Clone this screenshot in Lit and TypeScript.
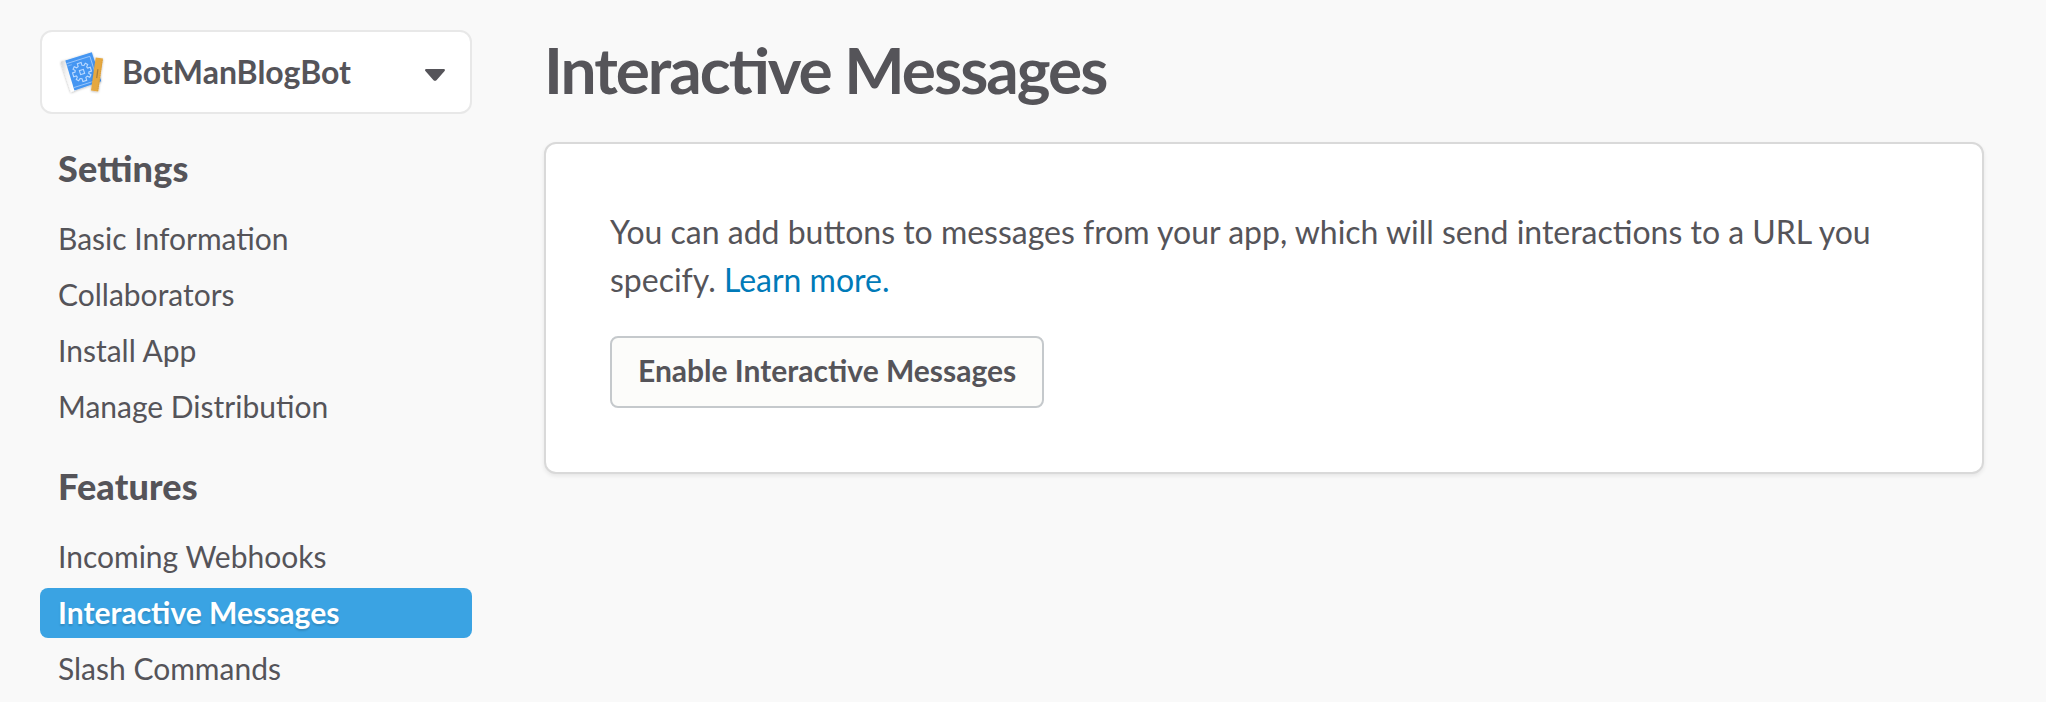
import { LitElement, html, css } from "lit";
import { customElement, state } from "lit/decorators.js";
import { classMap } from "lit/directives/class-map.js";

interface Section {
  title: string;
  items: string[];
}

const SECTIONS: Section[] = [
  {
    title: "Settings",
    items: ["Basic Information", "Collaborators", "Install App", "Manage Distribution"],
  },
  {
    title: "Features",
    items: ["Incoming Webhooks", "Interactive Messages", "Slash Commands"],
  },
];

@customElement("app-switcher")
class AppSwitcher extends LitElement {
  static styles = css`
    :host {
      display: block;
    }
    .switcher {
      box-sizing: border-box;
      width: 100%;
      height: 84px;
      display: flex;
      align-items: center;
      padding: 0 24px 0 14px;
      border: 2px solid #e8e8e8;
      border-radius: 12px;
      background: #fff;
      color: #555459;
      font: 700 32px/40px "Lato", sans-serif;
      text-align: left;
    }
    .logo {
      flex: none;
      width: 52px;
      height: 56px;
      margin-right: 14px;
    }
    .name {
      flex: 1;
      padding-bottom: 1px;
    }
    .caret {
      flex: none;
      width: 22px;
      height: 14px;
      margin-top: 5px;
    }
  `;

  render() {
    return html`
      <button class="switcher">
        <svg class="logo" viewBox="56 44 52 56" aria-hidden="true">
          <defs>
            <filter id="soft" x="-20%" y="-20%" width="140%" height="140%">
              <feDropShadow dx="0" dy="0.6" stdDeviation="1" flood-color="#000" flood-opacity="0.3" />
            </filter>
            <linearGradient id="spine" x1="0" x2="1" y1="0" y2="0.3">
              <stop offset="0" stop-color="#d2d2d2" />
              <stop offset="0.45" stop-color="#f4f4f4" />
              <stop offset="1" stop-color="#ffffff" />
            </linearGradient>
          </defs>
          <g filter="url(#soft)">
            <path d="M60.6 61.8 66 59.9 75.4 90.6 70.8 92.2Z" fill="url(#spine)" />
            <path d="M65.3 60.6 91.8 52.3 101.3 81.3 74.4 90.4Z" fill="#4596f2" />
          </g>
          <g transform="translate(82 72) rotate(-17.5)" fill="none" stroke="#bcdaff">
            <path d="M-12.3-12.6H12.2V12.4H-12.3" stroke-width="0.9" opacity="0.7" />
            <path d="M-12.3-10H-7.5" stroke-width="0.7" opacity="0.6" />
            <path
              d="M-2-9.3H2V-6.4L3.8-5.6 5.8-7.4 7.7-5.4 6-3.5 6.6-2H9.3V2H6.6L6 3.5 7.7 5.4 5.8 7.4 3.8 5.6 2 6.4V9.3H-2V6.4L-3.8 5.6-5.8 7.4-7.7 5.4-6 3.5-6.6 2H-9.3V-2H-6.6L-6-3.5-7.7-5.4-5.8-7.4-3.8-5.6-2-6.4Z"
              stroke-width="1.1"
            />
            <rect x="-2.1" y="-2.1" width="4.2" height="4.2" stroke-width="1.1" />
          </g>
          <g filter="url(#soft)">
            <path d="M95.7 57.4 103 58.4 98.2 91.6 91 90.5Z" fill="#e5a841" />
          </g>
          <path d="M97.9 69.2 96.7 78.2" stroke="#9a7238" stroke-width="1.2" opacity="0.8" />
          <path d="M102.3 60 97.7 90.5" stroke="#c98c2e" stroke-width="0.9" stroke-dasharray="0.8 1.1" opacity="0.7" />
        </svg>
        <span class="name">BotManBlogBot</span>
        <svg class="caret" viewBox="0 0 22 14" aria-hidden="true">
          <path
            d="M2.2 1H19.8C21 1 21.4 2.1 20.6 2.9L12.7 11.9Q11 13.7 9.3 11.9L1.4 2.9C.6 2.1 1 1 2.2 1Z"
            fill="#555459"
          />
        </svg>
      </button>
    `;
  }
}

@customElement("app-root")
class AppRoot extends LitElement {
  static styles = css`
    :host {
      display: block;
      background: #f9f9f9;
      color: #555459;
      font-family: "Lato", sans-serif;
      font-feature-settings: "liga" 1, "clig" 1;
    }
    .page {
      box-sizing: border-box;
      height: 702px;
      overflow: hidden;
      display: grid;
      grid-template-columns: 432px 1440px;
      column-gap: 72px;
      padding: 30px 0 0 40px;
    }
    .heading {
      margin: 34px 18px 26px;
      font-size: 36px;
      font-weight: 900;
      line-height: 40px;
      letter-spacing: 0.15px;
    }
    .list {
      display: flex;
      flex-direction: column;
      gap: 6px;
      margin: 0;
      padding: 0;
      list-style: none;
    }
    .item {
      box-sizing: border-box;
      height: 50px;
      padding: 0 18px;
      border-radius: 8px;
      font-size: 30px;
      line-height: 48px;
      cursor: pointer;
    }
    .active {
      background: #3aa3e3;
      color: #fff;
      font-weight: 700;
      text-shadow: 0 2px 2px rgba(0, 0, 0, 0.15);
    }
    .title {
      margin: 8px 0 40px;
      font-size: 64px;
      font-weight: 700;
      line-height: 64px;
      letter-spacing: -2px;
    }
    .card {
      padding: 64px;
      border: 2px solid #d9d9d9;
      border-radius: 12px;
      background: #fff;
      box-shadow: 0 2px 4px rgba(0, 0, 0, 0.08);
    }
    .copy {
      margin: 0 0 32px;
      font-size: 32px;
      line-height: 48px;
      letter-spacing: -0.01px;
    }
    .link {
      color: #007ab8;
      text-decoration: none;
    }
    .button {
      display: block;
      box-sizing: border-box;
      height: 72px;
      padding: 0 26px 4px;
      border: 2px solid #c5c9cc;
      border-radius: 8px;
      background: #fcfcfa;
      color: #555459;
      font: 700 30px/40px "Lato", sans-serif;
      white-space: nowrap;
    }
  `;

  @state() private current = "Interactive Messages";

  render() {
    return html`
      <div class="page">
        <aside>
          <app-switcher></app-switcher>
          ${SECTIONS.map(
            (section) => html`
              <h2 class="heading">${section.title}</h2>
              <ul class="list">
                ${section.items.map(
                  (item) => html`<li
                    class=${classMap({ item: true, active: item === this.current })}
                    @click=${() => (this.current = item)}
                  >${item}</li>`
                )}
              </ul>
            `
          )}
        </aside>
        <main>
          <h1 class="title">Interactive Messages</h1>
          <section class="card">
            <p class="copy">
              You can add buttons to messages from your app, which will send interactions to a URL you
              specify. <a class="link" href="#">Learn more.</a>
            </p>
            <button class="button">Enable Interactive Messages</button>
          </section>
        </main>
      </div>
    `;
  }
}
